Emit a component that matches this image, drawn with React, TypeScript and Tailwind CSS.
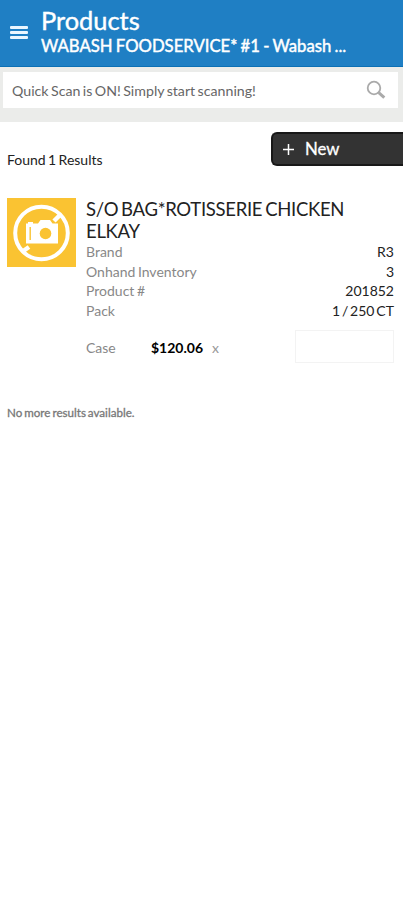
import React from "react";

const details = [
  { label: "Brand", value: "R3" },
  { label: "Onhand Inventory", value: "3" },
  { label: "Product #", value: "201852" },
  { label: "Pack", value: "1 / 250 CT" },
];

function Header() {
  return (
    <header className="flex h-[67px] items-start border-b border-[#0b70b5] bg-[#1f7fc4] text-white">
      <button aria-label="Menu" className="mt-[26px] ml-2.5 flex w-[18px] flex-col gap-[2px]">
        <span className="h-[3px] w-full rounded-[1px] bg-[#eaf6ff]" />
        <span className="h-[3px] w-full rounded-[1px] bg-[#eaf6ff]" />
        <span className="h-[3px] w-full rounded-[1px] bg-[#eaf6ff]" />
      </button>
      <div className="ml-[13px] pt-[5px] whitespace-nowrap">
        <h1 className="text-[25.4px] leading-[30px] [-webkit-text-stroke:0.4px_white]">Products</h1>
        <p className="mt-px text-[16.7px] leading-[21px] [word-spacing:-1px] [-webkit-text-stroke:0.45px_white]">
          WABASH FOODSERVICE* #1 - Wabash ...
        </p>
      </div>
    </header>
  );
}

function SearchBar() {
  return (
    <div className="h-[55px] bg-[#ebecea] pt-[5px] pr-[5px] pl-[3px]">
      <div className="flex h-[36px] items-center justify-between bg-white pr-[12px] pl-[9px]">
        <span className="mt-[2px] text-[14.2px] text-[#666] [word-spacing:-1.2px]">Quick Scan is ON! Simply start scanning!</span>
        <svg width="20" height="20" viewBox="0 0 20 20" fill="none" stroke="#aaa">
          <circle cx="8" cy="8" r="6.3" strokeWidth="1.8" />
          <path d="M12.7 12.7 L18.3 17.7" strokeWidth="3" />
        </svg>
      </div>
    </div>
  );
}

function NoPhoto() {
  return (
    <svg className="shrink-0" width="69" height="69" viewBox="0 0 69 69">
      <rect width="69" height="69" fill="#fac332" />
      <circle cx="34.5" cy="35" r="26.3" fill="none" stroke="#fff" strokeWidth="4" />
      <path d="M47 23 L53 17 M15.5 53.5 L22 49" stroke="#fff" strokeWidth="4.5" />
      <path d="M19 25.5h2v-1.5h5v1.5h5l2.5-3.5h9.5l2.5 3.5h5.5v20H19z" fill="#fff" />
      <path d="M23.2 29v13" stroke="#fac332" strokeWidth="1.4" />
      <circle cx="38.5" cy="35.5" r="5.8" fill="#fac332" />
    </svg>
  );
}

export default function App() {
  return (
    <div className="h-[900px] w-full overflow-hidden bg-white font-['Lato',sans-serif] text-[#222]">
      <Header />
      <SearchBar />
      <div className="flex h-[76px] items-start justify-between pt-[10px] pl-[7px]">
        <p className="mt-[18px] text-[14px] leading-5 [word-spacing:-1.2px]">Found 1 Results</p>
        <button className="flex h-[34px] w-[132px] items-center rounded-l-[6px] border-2 border-r-0 border-[#181818] bg-[#333] pl-[10px] text-white">
          <svg width="11" height="11" viewBox="0 0 11 11" stroke="#fff" strokeWidth="1.5">
            <path d="M5.5 0v11M0 5.5h11" />
          </svg>
          <span className="ml-[11px] text-[16.8px] leading-5 [-webkit-text-stroke:0.3px_white]">New</span>
        </button>
      </div>
      <main className="flex pr-[9px] pl-[7px]">
        <NoPhoto />
        <div className="ml-[10px] flex-1">
          <h2 className="w-[290px] text-[18.5px] leading-[22px] tracking-[-0.3px] text-[#222] [word-spacing:-1.5px]">
            S/O BAG*ROTISSERIE CHICKEN ELKAY
          </h2>
          <dl className="text-[14px] leading-[19.6px]">
            {details.map((item) => (
              <div key={item.label} className="flex justify-between">
                <dt className="text-[#888] [word-spacing:-1px]">{item.label}</dt>
                <dd className="[word-spacing:-1.7px]">{item.value}</dd>
              </div>
            ))}
          </dl>
          <div className="mt-[10px] flex h-[33px] items-center text-[14px]">
            <span className="mt-[2px] w-[65px] text-[#888]">Case</span>
            <span className="mt-[2px] font-bold text-black">$120.06</span>
            <span className="mt-[2px] ml-[9px] text-[#999]">x</span>
            <div className="ml-auto h-[33px] w-[99px] border border-[#f3f3f3]" />
          </div>
        </div>
      </main>
      <p className="mt-[42px] pl-[7px] text-[11.6px] leading-4 text-[#777] [word-spacing:-1px] [-webkit-text-stroke:0.3px_#777]">
        No more results available.
      </p>
    </div>
  );
}
